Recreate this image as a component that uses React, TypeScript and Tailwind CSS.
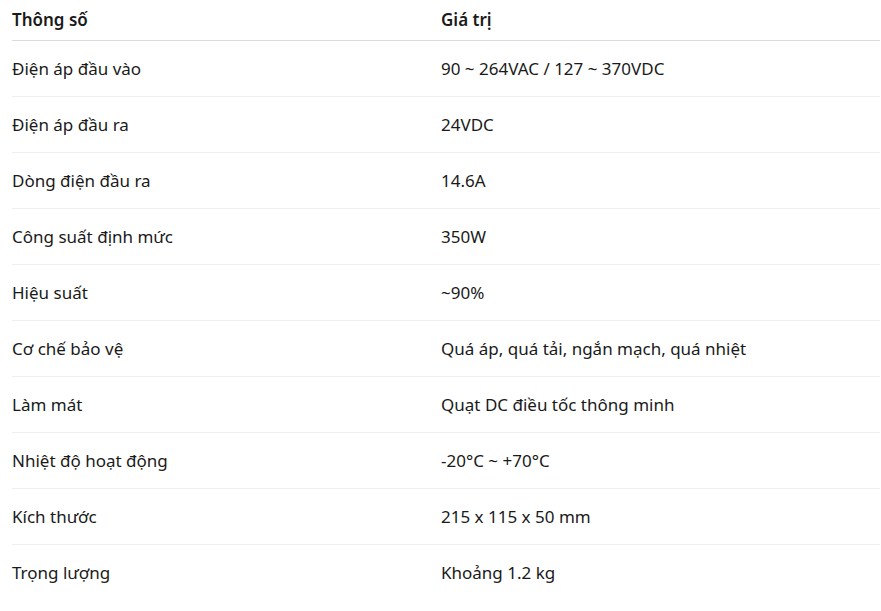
const rows: [string, string][] = [
  ["Điện áp đầu vào", "90 ~ 264VAC / 127 ~ 370VDC"],
  ["Điện áp đầu ra", "24VDC"],
  ["Dòng điện đầu ra", "14.6A"],
  ["Công suất định mức", "350W"],
  ["Hiệu suất", "~90%"],
  ["Cơ chế bảo vệ", "Quá áp, quá tải, ngắn mạch, quá nhiệt"],
  ["Làm mát", "Quạt DC điều tốc thông minh"],
  ["Nhiệt độ hoạt động", "-20°C ~ +70°C"],
  ["Kích thước", "215 x 115 x 50 mm"],
  ["Trọng lượng", "Khoảng 1.2 kg"],
];

export default function App() {
  return (
    <div className="min-h-screen bg-white pl-3 pr-px font-['Noto_Sans',sans-serif] text-[17px] text-[#1a1a1a]">
      <div className="grid h-[41px] grid-cols-[429px_1fr] items-center border-b border-[#dcdcdc] font-semibold">
        <div>Thông số</div>
        <div>Giá trị</div>
      </div>
      {rows.map(([k, v], i) => (
        <div
          key={k}
          className={`grid h-14 grid-cols-[429px_1fr] items-center ${
            i < rows.length - 1 ? "border-b border-[#efefef]" : ""
          }`}
        >
          <div>{k}</div>
          <div>{v}</div>
        </div>
      ))}
    </div>
  );
}
